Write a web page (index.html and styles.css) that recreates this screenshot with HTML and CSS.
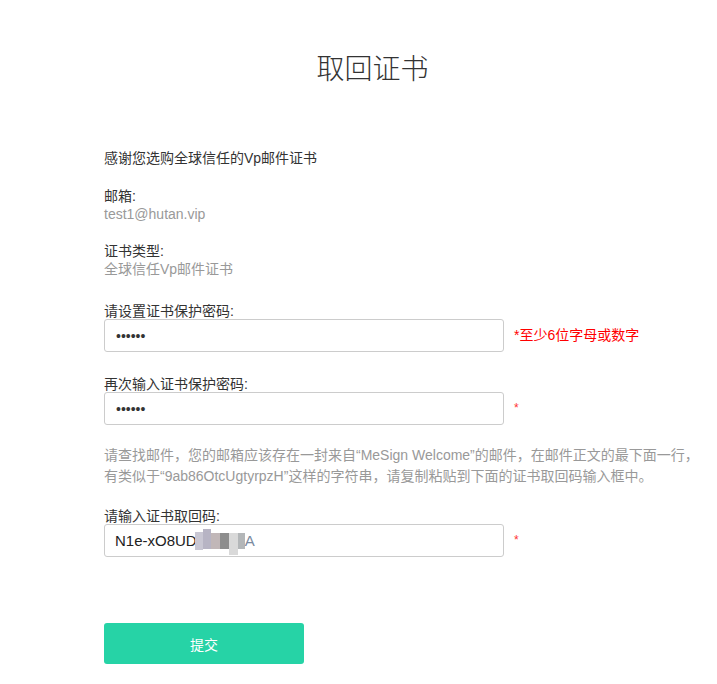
FILE: index.html
```html
<!DOCTYPE html>
<html lang="zh-CN">
<head>
<meta charset="utf-8">
<title>取回证书</title>
<link rel="stylesheet" href="styles.css">
</head>
<body>
<div class="page">
  <h1 class="title">取回证书</h1>
  <p class="intro">感谢您选购全球信任的Vp邮件证书</p>

  <div class="info first">
    <div class="label">邮箱:</div>
    <div class="value">test1@hutan.vip</div>
  </div>
  <div class="info">
    <div class="label">证书类型:</div>
    <div class="value">全球信任Vp邮件证书</div>
  </div>

  <div class="field f1">
    <div class="label flabel">请设置证书保护密码:</div>
    <div class="row">
      <input class="input" type="password" value="123456">
      <span class="note">*至少6位字母或数字</span>
    </div>
  </div>

  <div class="field f2">
    <div class="label flabel">再次输入证书保护密码:</div>
    <div class="row">
      <input class="input" type="password" value="123456">
      <span class="note star">*</span>
    </div>
  </div>

  <p class="hint">请查找邮件，您的邮箱应该存在一封来自“MeSign Welcome”的邮件，在邮件正文的最下面一行，<br>有类似于“9ab86OtcUgtyrpzH”这样的字符串，请复制粘贴到下面的证书取回码输入框中。</p>

  <div class="field f3">
    <div class="label flabel">请输入证书取回码:</div>
    <div class="row">
      <div class="input code">
        <span class="code-text">N1e-xO8UD</span>
        <span class="mosaic"><i class="m1"></i><i class="m2"></i><i class="m3"></i><i class="m4"></i><i class="m5"></i><i class="m6"></i></span><span class="code-text tail">A</span>
      </div>
      <span class="note star">*</span>
    </div>
  </div>

  <button class="submit" type="button">提交</button>
</div>
</body>
</html>
```
FILE: styles.css
```css
html, body {
  margin: 0;
  padding: 0;
  background: #fff;
}
body {
  font-family: "Liberation Sans", "Noto Sans CJK SC", sans-serif;
  font-size: 14px;
  color: #333;
}
.page {
  width: 537px;
  margin-left: 104px;
  padding-top: 50px;
}
.title {
  margin: 0;
  height: 40px;
  line-height: 40px;
  font-size: 28px;
  font-weight: 300;
  text-align: center;
  color: #333;
}
.intro {
  margin: 59px 0 0;
  line-height: 18px;
}
.info {
  margin-top: 20px;
}
.info.first {
  margin-top: 21px;
}
.label {
  line-height: 17px;
  color: #333;
}
.label.flabel {
  line-height: 15px;
}
.value {
  line-height: 18px;
  color: #999;
}
.field {
  margin-top: 26px;
}
.field.f2 {
  margin-top: 25px;
}
.field.f3 {
  margin-top: 22px;
}
.row {
  display: flex;
  align-items: center;
  gap: 10px;
}
.input {
  box-sizing: border-box;
  width: 400px;
  height: 33px;
  flex: none;
  margin: 0;
  padding: 0 11px;
  border: 1px solid #ccc;
  border-radius: 3px;
  font-family: "Liberation Sans", "Noto Sans CJK SC", sans-serif;
  font-size: 14px;
  color: #333;
  outline: none;
  background: #fff;
}
.note {
  color: #f00;
  font-size: 14px;
  line-height: 17px;
}
.note.star {
  font-size: 12px;
  color: #f33;
}
.hint {
  margin: 20px 0 0;
  width: 620px;
  line-height: 21px;
  color: #999;
}
.code {
  display: flex;
  align-items: center;
  padding-left: 10px;
  font-size: 15px;
  color: #222;
}
.mosaic {
  display: inline-flex;
  align-items: center;
  height: 26px;
  margin-left: -2px;
}
.mosaic i {
  display: block;
  height: 16px;
}
.mosaic .m1 { width: 8px; background: #c9c7d3; height: 18px; }
.mosaic .m2 { width: 8px; background: #b7b4c4; height: 20px; margin-top: -4px; }
.mosaic .m3 { width: 9px; background: #c1b7b8; }
.mosaic .m4 { width: 9px; background: #8d8d8d; }
.mosaic .m5 { width: 9px; background: #d9d9d9; height: 22px; margin-top: 6px; }
.mosaic .m6 { width: 7px; background: #b3b6b8; }
.tail {
  color: #7a8aa0;
}
.submit {
  display: block;
  margin-top: 66px;
  width: 200px;
  height: 41px;
  border: none;
  border-radius: 3px;
  background: #26d3a6;
  color: #fff;
  font-family: "Liberation Sans", "Noto Sans CJK SC", sans-serif;
  font-size: 14px;
  cursor: pointer;
}
```
